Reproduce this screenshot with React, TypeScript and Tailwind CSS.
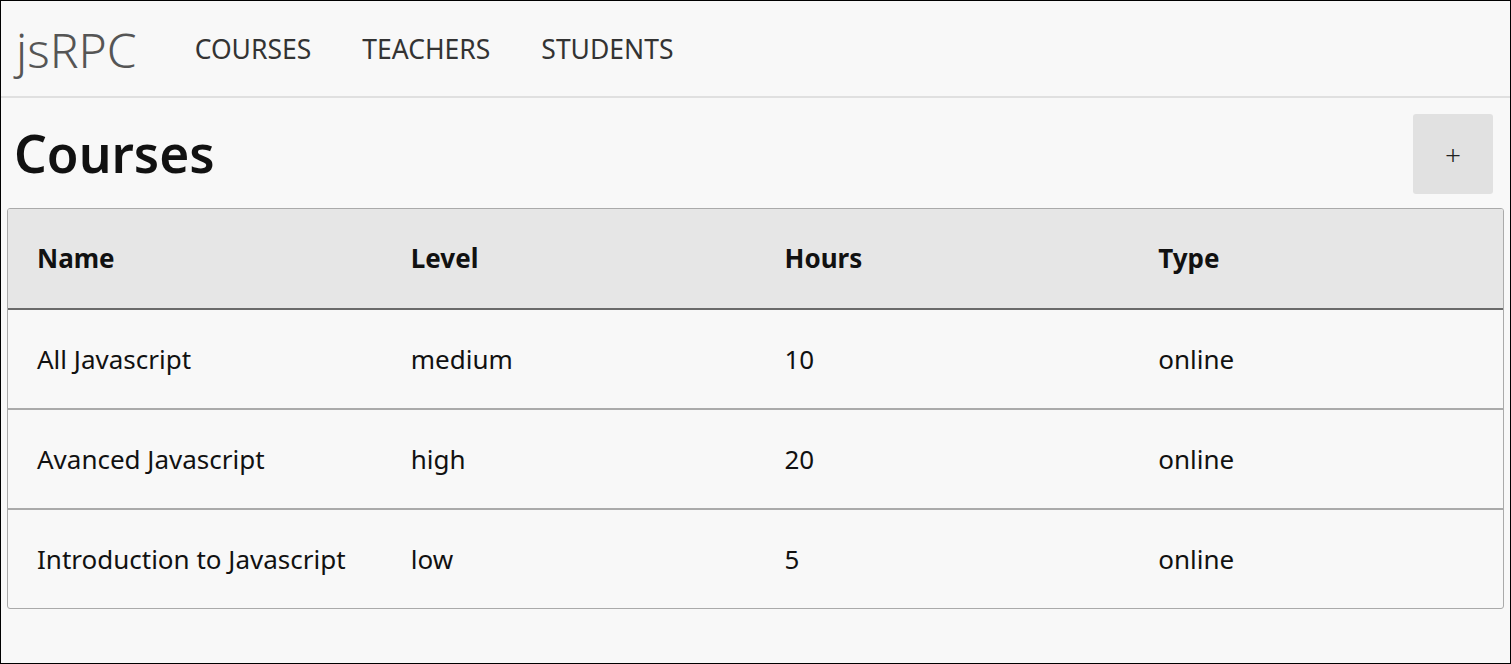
const courses = [
  { name: "All Javascript", level: "medium", hours: 10, type: "online" },
  { name: "Avanced Javascript", level: "high", hours: 20, type: "online" },
  { name: "Introduction to Javascript", level: "low", hours: 5, type: "online" },
];

const navLinks = ["COURSES", "TEACHERS", "STUDENTS"];

const App = () => {
  return (
    <div className="h-[664px] w-full border border-black bg-[#f8f8f8] font-['Noto_Sans',sans-serif] text-[#111]">
      <nav className="flex h-[97px] items-center border-b-2 border-[#e0e0e0] px-[15px] pt-[3px]">
        <span className="text-[48px] font-light leading-none text-[#555]">jsRPC</span>
        <ul className="ml-[58px] flex gap-[51px]">
          {navLinks.map((link) => (
            <li key={link} className="text-[26.5px] text-[#333]">
              {link}
            </li>
          ))}
        </ul>
      </nav>

      <main className="px-[6px] pt-[16px]">
        <div className="flex items-center justify-between">
          <h1 className="ml-[7px] text-[51.5px] font-semibold leading-none">Courses</h1>
          <button className="mr-[11px] h-20 w-20 rounded-[3px] bg-[#e1e1e1] text-[28px] font-light leading-none text-[#222]">
            +
          </button>
        </div>

        <div className="mt-[14px] overflow-hidden rounded-[3px] border border-[#aaa]">
          <div className="grid h-[101px] grid-cols-4 items-center border-b-2 border-[#6a6a6a] bg-[#e6e6e6] text-[26px] font-bold">
            <span className="pl-[29px]">Name</span>
            <span className="pl-[29px]">Level</span>
            <span className="pl-[29px]">Hours</span>
            <span className="pl-[29px]">Type</span>
          </div>
          {courses.map((course, i) => (
            <div
              key={course.name}
              className={`grid grid-cols-4 items-center text-[26px] ${
                i < courses.length - 1 ? "h-[100px] border-b-2 border-[#aaa]" : "h-[98px]"
              }`}
            >
              <span className="pl-[29px]">{course.name}</span>
              <span className="pl-[29px]">{course.level}</span>
              <span className="pl-[29px]">{course.hours}</span>
              <span className="pl-[29px]">{course.type}</span>
            </div>
          ))}
        </div>
      </main>
    </div>
  );
};

export default App;
